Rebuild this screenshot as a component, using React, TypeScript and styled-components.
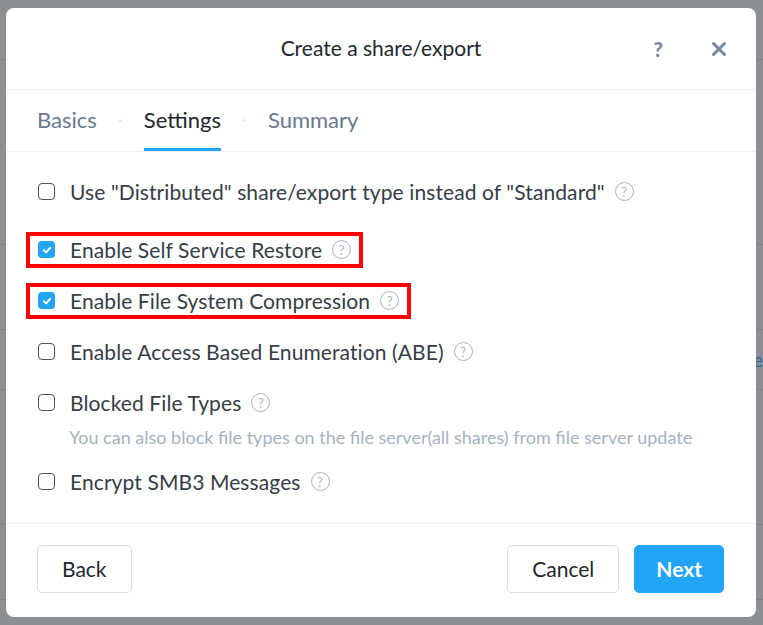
import styled, { createGlobalStyle } from "styled-components";

const GlobalStyle = createGlobalStyle`
  html, body {
    margin: 0;
    padding: 0;
    background: #8c8f94;
    font-family: Lato, "Open Sans", sans-serif;
  }
  * { box-sizing: border-box; }
`;

type Option = {
  label: string;
  checked?: boolean;
  highlighted?: boolean;
  hint?: string;
};

const options: Option[] = [
  { label: 'Use "Distributed" share/export type instead of "Standard"' },
  { label: "Enable Self Service Restore", checked: true, highlighted: true },
  { label: "Enable File System Compression", checked: true, highlighted: true },
  { label: "Enable Access Based Enumeration (ABE)" },
  {
    label: "Blocked File Types",
    hint: "You can also block file types on the file server(all shares) from file server update",
  },
  { label: "Encrypt SMB3 Messages" },
];

const tabs = ["Basics", "Settings", "Summary"];

const HelpIcon = () => <HelpCircle>?</HelpCircle>;

const CheckBox = ({ checked }: { checked?: boolean }) => (
  <Box $checked={checked}>
    {checked && (
      <svg width="10" height="10" viewBox="0 0 10 10">
        <path d="M1.8 5.2 L4.1 7.4 L8.2 2.8" fill="none" stroke="#fff" strokeWidth="2" strokeLinecap="round" strokeLinejoin="round" />
      </svg>
    )}
  </Box>
);

export default function App() {
  return (
    <>
      <GlobalStyle />
      <Backdrop>
        <BackRow $h={60} />
        <BackRow $h={185} />
        <BackRow $h={85} />
        <BackRow $h={60}>
          <BackLink>e</BackLink>
        </BackRow>
        <BackRow $h={135} />
        <BackRow $h={75} />
      </Backdrop>
      <Modal>
        <Header>
          <Title>Create a share/export</Title>
          <HeaderActions>
            <HeaderQuestion>?</HeaderQuestion>
            <svg width="16" height="16" viewBox="0 0 16 16">
              <path d="M2.5 2.5 L13.5 13.5 M13.5 2.5 L2.5 13.5" stroke="#7b889b" strokeWidth="3" strokeLinecap="round" />
            </svg>
          </HeaderActions>
        </Header>
        <Tabs>
          {tabs.map((t, i) => (
            <TabGroup key={t}>
              {i > 0 && <TabDot />}
              <Tab $active={t === "Settings"}>{t}</Tab>
            </TabGroup>
          ))}
        </Tabs>
        <Body>
          {options.map((o, i) => (
            <OptionBlock key={o.label} $first={i === 0}>
              <Row $highlighted={o.highlighted}>
                <CheckBox checked={o.checked} />
                <Label>{o.label}</Label>
                <HelpIcon />
              </Row>
              {o.hint && <Hint>{o.hint}</Hint>}
            </OptionBlock>
          ))}
        </Body>
        <Footer>
          <Button>Back</Button>
          <Spacer />
          <Button>Cancel</Button>
          <Button $primary>Next</Button>
        </Footer>
      </Modal>
    </>
  );
}

const Backdrop = styled.div`
  width: 763px;
  height: 625px;
  overflow: hidden;
  display: flex;
  flex-direction: column;
`;

const BackRow = styled.div<{ $h: number }>`
  height: ${(p) => p.$h}px;
  flex-shrink: 0;
  border-bottom: 1px solid #7f8287;
  display: flex;
  align-items: center;
`;

const BackLink = styled.span`
  margin-left: 753px;
  color: #2f6aa8;
  font-size: 19px;
`;

const Modal = styled.div`
  position: absolute;
  left: 6px;
  top: 8px;
  width: 750px;
  height: 609px;
  background: #fff;
  border-radius: 8px;
  display: flex;
  flex-direction: column;
  overflow: hidden;
`;

const Header = styled.div`
  height: 82px;
  display: flex;
  align-items: center;
  justify-content: center;
  position: relative;
  border-bottom: 1px solid #eef0f3;
  flex-shrink: 0;
`;

const Title = styled.div`
  font-size: 21px;
  color: #22272e;
  margin-top: -2px;
`;

const HeaderActions = styled.div`
  position: absolute;
  right: 29px;
  top: 33px;
  display: flex;
  align-items: center;
  gap: 48px;
`;

const HeaderQuestion = styled.span`
  font-size: 21px;
  font-weight: 900;
  color: #7b889b;
  line-height: 16px;
`;

const Tabs = styled.div`
  height: 62px;
  display: flex;
  align-items: stretch;
  padding-left: 31px;
  border-bottom: 1px solid #eef0f3;
  flex-shrink: 0;
`;

const TabGroup = styled.div`
  display: flex;
  align-items: stretch;
`;

const TabDot = styled.span`
  width: 3px;
  height: 3px;
  border-radius: 50%;
  background: #e3e7ec;
  align-self: center;
  margin: 0 22px;
  margin-top: -1px;
`;

const Tab = styled.div<{ $active?: boolean }>`
  display: flex;
  align-items: center;
  font-size: 22px;
  padding-top: 1px;
  color: ${(p) => (p.$active ? "#22272e" : "#6a798d")};
  border-bottom: 3px solid ${(p) => (p.$active ? "#22a5f7" : "transparent")};
`;

const Body = styled.div`
  flex: 1;
  padding: 14px 31px 0 20px;
  display: flex;
  flex-direction: column;
`;

const OptionBlock = styled.div<{ $first?: boolean }>`
  display: flex;
  flex-direction: column;
  margin-bottom: ${(p) => (p.$first ? "7px" : "0")};
`;

const Row = styled.div<{ $highlighted?: boolean }>`
  height: 51px;
  display: flex;
  align-items: center;
  padding-left: 12px;
  align-self: flex-start;
  ${(p) =>
    p.$highlighted &&
    `
    height: 36px;
    margin: 7.5px 0;
    border: 4px solid #ff0000;
    padding-left: 8px;
    padding-right: 8px;
  `}
`;

const Box = styled.span<{ $checked?: boolean }>`
  width: 17px;
  height: 17px;
  border-radius: 4px;
  border: ${(p) => (p.$checked ? "none" : "1.5px solid #4c5461")};
  background: ${(p) => (p.$checked ? "#22a5f7" : "#fff")};
  display: flex;
  align-items: center;
  justify-content: center;
  flex-shrink: 0;
`;

const Label = styled.span`
  font-size: 21px;
  color: #363d47;
  margin-left: 15px;
  letter-spacing: 0.1px;
`;

const HelpCircle = styled.span`
  width: 19px;
  height: 19px;
  border-radius: 50%;
  border: 1px solid #a9b3c0;
  color: #a9b3c0;
  font-size: 13px;
  display: flex;
  align-items: center;
  justify-content: center;
  margin-left: 10px;
  flex-shrink: 0;
`;

const Hint = styled.div`
  font-size: 18px;
  color: #a7b2c0;
  padding-left: 43px;
  margin-top: -1.5px;
  margin-bottom: 9.5px;
  line-height: 20px;
`;

const Footer = styled.div`
  height: 94px;
  border-top: 1px solid #eef0f3;
  display: flex;
  align-items: center;
  gap: 15px;
  padding: 0 32px 4px 31px;
  flex-shrink: 0;
`;

const Spacer = styled.div`
  flex: 1;
`;

const Button = styled.button<{ $primary?: boolean }>`
  height: 48px;
  padding: ${(p) => (p.$primary ? "0 21px" : "0 24px")};
  border-radius: 5px;
  font-family: Lato, "Open Sans", sans-serif;
  font-size: 21px;
  font-weight: ${(p) => (p.$primary ? 700 : 400)};
  color: ${(p) => (p.$primary ? "#fff" : "#22272e")};
  background: ${(p) => (p.$primary ? "#22a5f7" : "#fff")};
  border: 1px solid ${(p) => (p.$primary ? "#22a5f7" : "#d7dce3")};
  cursor: pointer;
`;
